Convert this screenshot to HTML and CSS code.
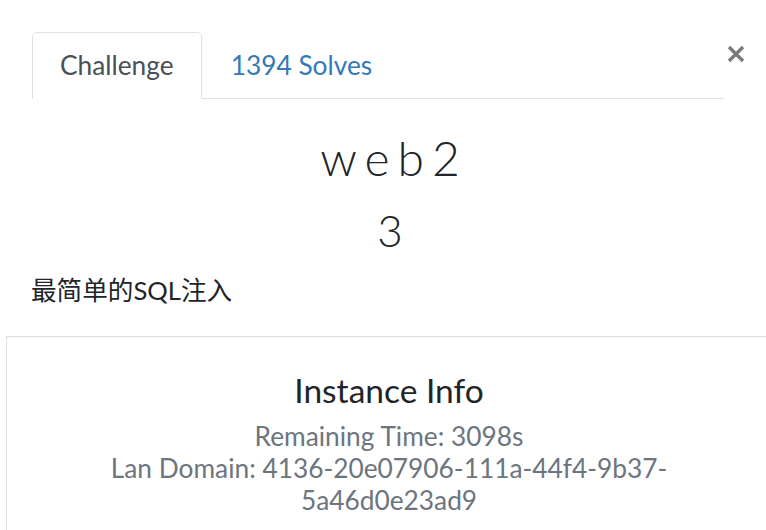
FILE: index.html
```html
<!DOCTYPE html>
<html lang="zh">
<head>
<meta charset="utf-8">
<title>web2</title>
<link rel="stylesheet" href="styles.css">
</head>
<body>
<div class="modal">
  <div class="header">
    <ul class="nav">
      <li class="tab active">Challenge</li>
      <li class="tab link">1394 Solves</li>
    </ul>
    <button class="close" aria-label="Close">
      <svg width="18" height="18" viewBox="0 0 18 18"><path d="M2 2 L16 16 M16 2 L2 16" stroke="#7b7b7b" stroke-width="3.4" fill="none"/></svg>
    </button>
  </div>
  <h3 class="name">web2</h3>
  <h4 class="value">3</h4>
  <p class="desc">最简单的SQL注入</p>
  <div class="card">
    <h4 class="card-title">Instance Info</h4>
    <p class="info">Remaining Time: 3098s</p>
    <p class="info">Lan Domain: 4136-20e07906-111a-44f4-9b37-5a46d0e23ad9</p>
  </div>
</div>
</body>
</html>
```
FILE: styles.css
```css
html, body {
  margin: 0;
  padding: 0;
  overflow: hidden;
  background: #fff;
}
body {
  font-family: Lato, "Noto Sans CJK SC", sans-serif;
  color: #212529;
  font-size: 26.3px;
}
.modal {
  width: 780px;
}
.header {
  display: flex;
  align-items: flex-start;
  padding: 32px 0 0 32px;
}
.nav {
  display: flex;
  width: 692px;
  margin: 0;
  padding: 0;
  list-style: none;
  border-bottom: 1px solid #dee2e6;
}
.tab {
  padding: 13px 27px;
  line-height: 39px;
  border: 1px solid transparent;
  border-radius: 5px 5px 0 0;
  margin-bottom: -1px;
}
.tab.active {
  color: #495057;
  border-color: #dee2e6 #dee2e6 #fff;
}
.tab.link {
  color: #337ab7;
  padding-left: 28px;
}
.close {
  margin: 13px 0 0 3px;
  padding: 0;
  border: 0;
  background: none;
  width: 18px;
  height: 18px;
  display: block;
}
.close svg { display: block; }
.name {
  margin: 32px 0 0;
  padding-left: 8px;
  text-align: center;
  font-weight: 300;
  font-size: 48px;
  line-height: 54px;
  letter-spacing: 8px;
}
.value {
  margin: 22px 0 0;
  text-align: center;
  font-weight: 300;
  font-size: 44px;
  line-height: 46px;
}
.desc {
  margin: 18px 0 0;
  padding-left: 31px;
  font-size: 25.6px;
  line-height: 38.4px;
}
.card {
  margin: 27px 0 0 6px;
  width: 644px;
  padding: 32px 60px 30px;
  border: 1px solid #dedede;
  text-align: center;
}
.card-title {
  margin: 0;
  font-weight: 400;
  font-size: 33.5px;
  line-height: 42px;
}
.info {
  margin: 0;
  color: #6c757d;
  line-height: 32px;
}
.card-title + .info {
  margin-top: 9px;
}
```
